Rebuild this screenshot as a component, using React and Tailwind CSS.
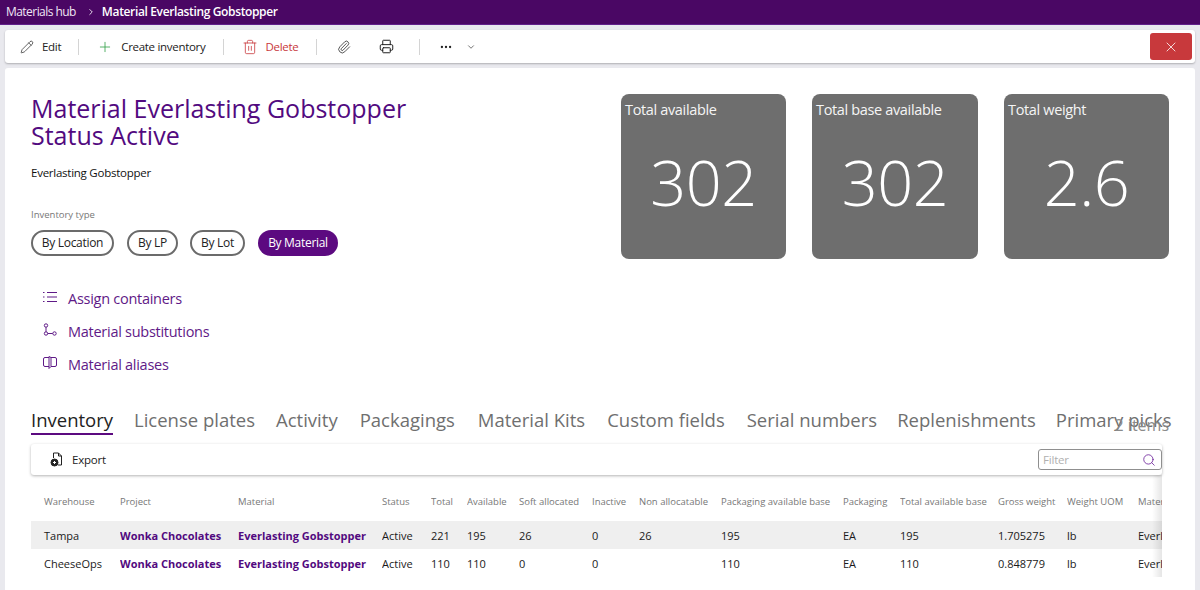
import React from "react";
import { Pencil, Plus, Trash2, Paperclip, Printer, MoreHorizontal, ChevronDown, ChevronRight, X, Search } from "lucide-react";

const Sep = ({ cls }) => <div className={`w-px h-[16px] bg-[#d4d4d4] ${cls}`} />;

const columns = [
  ["Warehouse", 89], ["Project", 118], ["Material", 144], ["Status", 49], ["Total", 36], ["Available", 52],
  ["Soft allocated", 73], ["Inactive", 47], ["Non allocatable", 82], ["Packaging available base", 122],
  ["Packaging", 57], ["Total available base", 98], ["Gross weight", 69], ["Weight UOM", 71], ["Material description", 120],
];
const rows = [
  ["Tampa", "Wonka Chocolates", "Everlasting Gobstopper", "Active", "221", "195", "26", "0", "26", "195", "EA", "195", "1.705275", "lb", "Everlasting Gobstopper"],
  ["CheeseOps", "Wonka Chocolates", "Everlasting Gobstopper", "Active", "110", "110", "0", "0", "", "110", "EA", "110", "0.848779", "lb", "Everlasting Gobstopper"],
];
const tabs = [
  ["License plates", "ml-[21px]"],
  ["Activity", "ml-[21px]"],
  ["Packagings", "ml-[22px]"],
  ["Material Kits", "ml-[23px]"],
  ["Custom fields", "ml-[22px]"],
  ["Serial numbers", "ml-[22px]"],
  ["Replenishments", "ml-[20px]"],
  ["Primary picks", "ml-[20px]"],
];

function Stat({ label, value, cls }) {
  return (
    <div className={`h-[165px] rounded-[8px] bg-[#6e6e6e] text-white flex flex-col ${cls}`}>
      <div className="pl-[4px] pt-[6px] text-[14.5px] tracking-[-0.35px] leading-[20px] text-[#f5f5f5]">{label}</div>
      <div className="flex-1 flex items-center justify-center text-[63px] font-light leading-none pb-[16px] tracking-[-0.5px]">{value}</div>
    </div>
  );
}

function Pill({ children, active, cls }) {
  return (
    <div className={`h-[26px] rounded-full flex items-center justify-center text-[12px] tracking-[-0.3px] ${cls} ${active ? "bg-[#5c0a80] text-white" : "border-2 border-[#6b6b6b] text-[#222]"}`}>
      {children}
    </div>
  );
}

function LinkRow({ icon, children }) {
  return (
    <div className="flex items-center h-[33px] pl-[12px]">
      <div className="w-[25px] flex items-center -mt-[4px]">{icon}</div>
      <span className="text-[14.5px] tracking-[-0.27px] text-[#5f1a87]">{children}</span>
    </div>
  );
}

export default function App() {
  return (
    <div className="w-[1200px] h-[590px] overflow-hidden bg-[#e9e9ee] flex flex-col" style={{ fontFamily: '"Open Sans", "Noto Sans", sans-serif' }}>
      <div className="h-[25px] shrink-0 bg-[#4a0764] text-white flex items-center pl-[6px] text-[12px] tracking-[-0.55px] border-b border-[#62208a]">
        <span className="text-[#efe6f4]">Materials hub</span>
        <ChevronRight size={10} className="ml-[10px] mr-[6px]" />
        <span className="font-semibold text-[12px] tracking-[-0.36px]">Material Everlasting Gobstopper</span>
      </div>

      <div className="mx-[5px] mt-[5px] h-[33px] shrink-0 bg-white rounded-[3px] shadow-[0_1px_2px_rgba(0,0,0,0.25)] flex items-center text-[11.5px] tracking-[-0.3px] text-[#222]">
        <Pencil size={14} strokeWidth={1.2} className="ml-[15px]" />
        <span className="ml-[8px]">Edit</span>
        <Sep cls="ml-[17px]" />
        <Plus size={16} strokeWidth={1.2} className="ml-[18px] text-[#2f9e44]" />
        <span className="ml-[8px]">Create inventory</span>
        <Sep cls="ml-[18px]" />
        <Trash2 size={16} strokeWidth={1.2} className="ml-[18px] text-[#c8373b]" />
        <span className="ml-[7px] text-[#c8373b]">Delete</span>
        <Sep cls="ml-[18px]" />
        <Paperclip size={14} strokeWidth={1.3} className="ml-[20px]" />
        <Printer size={15} strokeWidth={1.6} className="ml-[28px]" />
        <Sep cls="ml-[25px]" />
        <MoreHorizontal size={14} strokeWidth={2} className="ml-[19px]" />
        <ChevronDown size={10} strokeWidth={1.5} className="ml-[13px]" />
        <div className="ml-auto mr-[3px] w-[42px] h-[27px] rounded-[3px] bg-[#c8393c] flex items-center justify-center">
          <X size={16} strokeWidth={1.2} className="text-white" />
        </div>
      </div>

      <div className="mx-[5px] mt-[5px] flex-1 min-h-0 bg-white rounded-t-[3px] flex flex-col overflow-hidden">
        <div className="flex h-[327px] shrink-0">
          <div className="pl-[26px] flex-1">
            <h1 className="pt-[27px] text-[#520a80] text-[25px] leading-[27px] whitespace-nowrap">
              <div>Material Everlasting Gobstopper</div>
              <div>Status Active</div>
            </h1>
            <div className="mt-[16px] text-[11.5px] tracking-[-0.25px] leading-[16px] text-[#111]">Everlasting Gobstopper</div>
            <div className="mt-[27px] text-[9.5px] leading-[14px] text-[#777]">Inventory type</div>
            <div className="mt-[8px] flex">
              <Pill cls="w-[83px]">By Location</Pill>
              <Pill cls="w-[51px] ml-[13px]">By LP</Pill>
              <Pill cls="w-[55px] ml-[12px]">By Lot</Pill>
              <Pill active cls="w-[80px] ml-[13px]">By Material</Pill>
            </div>
            <div className="mt-[26px]">
              <LinkRow icon={
                <svg width="14" height="12" viewBox="0 0 14 12" fill="none" stroke="#5f1a87" strokeWidth="1"><path d="M4 1.5h10M4 6h10M4 10.5h10M0 1.5h1.5M0 6h1.5M0 10.5h1.5" /></svg>
              }>Assign containers</LinkRow>
              <LinkRow icon={
                <svg width="14" height="13" viewBox="0 0 14 13" fill="none" stroke="#5f1a87" strokeWidth="1"><circle cx="3" cy="2.5" r="1.7" /><circle cx="3" cy="10.5" r="1.7" /><circle cx="11.5" cy="10.5" r="1.7" /><path d="M3 4.2v4.6M4.7 10.5h5" /></svg>
              }>Material substitutions</LinkRow>
              <LinkRow icon={
                <svg width="14" height="13" viewBox="0 0 14 13" fill="none" stroke="#5f1a87" strokeWidth="1"><path d="M6 1.5H2A1.5 1.5 0 0 0 .5 3v6A1.5 1.5 0 0 0 2 10.5h4M8 1.5h4A1.5 1.5 0 0 1 13.5 3v6a1.5 1.5 0 0 1-1.5 1.5H8M6 .5l2 1v9l-2 2z" /></svg>
              }>Material aliases</LinkRow>
            </div>
          </div>
          <div className="flex pt-[26px] pr-[26px] gap-[26px]">
            <Stat cls="w-[165px]" label="Total available" value="302" />
            <Stat cls="w-[166px]" label="Total base available" value="302" />
            <Stat cls="w-[165px]" label="Total weight" value="2.6" />
          </div>
        </div>

        <div className="relative ml-[26px] mr-[33px] h-[49px] shrink-0 flex items-start text-[18.5px] leading-[24px] text-[#6f6f6f] whitespace-nowrap">
          <div className="pt-[13px] w-[83px] text-[#222] border-b-2 border-[#5c0a80] h-[40px]">Inventory</div>
          {tabs.map(([t, m]) => (
            <div key={t} className={`pt-[13px] ${m}`}>{t}</div>
          ))}
          <span className="absolute right-[-7px] top-[20px] text-[16px] leading-[20px] text-[#8a8a8a]">2 items</span>
        </div>

        <div className="ml-[26px] mr-[33px] h-[31px] shrink-0 bg-white rounded-[3px] shadow-[0_1px_3px_rgba(0,0,0,0.3)] flex items-center text-[11.5px] tracking-[-0.2px] text-[#222]">
          <svg width="14" height="15" viewBox="0 0 14 15" fill="none" className="ml-[19px]" stroke="#222" strokeWidth="1"><path d="M3.5 6V1h5l3 3v9H8M8.5 1v3h3" /><circle cx="4.5" cy="10.5" r="3.5" fill="#222" /><path d="M3 10.5h3M4.5 9v3" stroke="#fff" /></svg>
          <span className="ml-[8px]">Export</span>
          <div className="ml-auto w-[124px] h-[21px] border border-[#8f8f8f] rounded-[3px] flex items-center justify-between pl-[4px] pr-[5px] text-[#b0b0b0] text-[11.5px]">
            <span>Filter</span>
            <Search size={14} strokeWidth={1.4} className="text-[#6b1f99]" />
          </div>
        </div>

        <div className="ml-[26px] mr-[33px] pt-[13px] overflow-hidden relative">
          <table className="table-fixed border-collapse text-[11px] whitespace-nowrap w-[1227px]">
            <thead>
              <tr className="h-[33px] text-[#777] text-[9.5px] text-left">
                {columns.map(([c, w], i) => (
                  <th key={c} style={{ width: w }} className={`font-normal align-middle p-0 pb-[5px] overflow-hidden ${i === 0 ? "pl-[13px]" : ""}`}>
                    {c}
                  </th>
                ))}
              </tr>
            </thead>
            <tbody>
              {rows.map((r, ri) => (
                <tr key={ri} className={`h-[28px] ${ri === 0 ? "bg-[#efefef]" : ""}`}>
                  {r.map((v, i) => (
                    <td key={i} className={`p-0 pt-[2px] overflow-hidden ${i === 0 ? "pl-[13px]" : ""} ${i === 1 || i === 2 ? "font-bold text-[#520a80]" : "text-[#1a1a1a]"}`}>
                      {v}
                    </td>
                  ))}
                </tr>
              ))}
            </tbody>
          </table>
          <div className="absolute right-0 top-0 bottom-0 w-[10px] bg-gradient-to-r from-transparent to-black/10" />
        </div>
      </div>
    </div>
  );
}
